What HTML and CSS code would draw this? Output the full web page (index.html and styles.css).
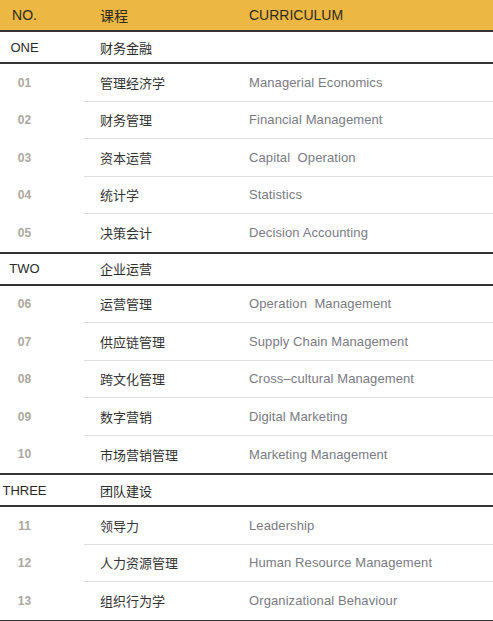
FILE: index.html
```html
<!DOCTYPE html>
<html lang="zh-CN">
<head>
<meta charset="utf-8">
<title>课程</title>
<link rel="stylesheet" href="styles.css">
</head>
<body>
<div class="table">
  <div class="head">
    <div class="c1">NO.</div>
    <div class="c2">课程</div>
    <div class="c3">CURRICULUM</div>
  </div>

  <div class="group">
    <div class="c1">ONE</div>
    <div class="c2">财务金融</div>
  </div>
  <div class="rows">
    <div class="row"><div class="num">01</div><div class="line"><div class="zh">管理经济学</div><div class="en">Managerial Economics</div></div></div>
    <div class="row"><div class="num">02</div><div class="line"><div class="zh">财务管理</div><div class="en">Financial Management</div></div></div>
    <div class="row"><div class="num">03</div><div class="line"><div class="zh">资本运营</div><div class="en">Capital&nbsp; Operation</div></div></div>
    <div class="row"><div class="num">04</div><div class="line"><div class="zh">统计学</div><div class="en">Statistics</div></div></div>
    <div class="row"><div class="num">05</div><div class="line"><div class="zh">决策会计</div><div class="en">Decision Accounting</div></div></div>
  </div>

  <div class="group">
    <div class="c1">TWO</div>
    <div class="c2">企业运营</div>
  </div>
  <div class="rows">
    <div class="row"><div class="num">06</div><div class="line"><div class="zh">运营管理</div><div class="en">Operation&nbsp; Management</div></div></div>
    <div class="row"><div class="num">07</div><div class="line"><div class="zh">供应链管理</div><div class="en">Supply Chain Management</div></div></div>
    <div class="row"><div class="num">08</div><div class="line"><div class="zh">跨文化管理</div><div class="en">Cross–cultural Management</div></div></div>
    <div class="row"><div class="num">09</div><div class="line"><div class="zh">数字营销</div><div class="en">Digital Marketing</div></div></div>
    <div class="row"><div class="num">10</div><div class="line"><div class="zh">市场营销管理</div><div class="en">Marketing Management</div></div></div>
  </div>

  <div class="group">
    <div class="c1">THREE</div>
    <div class="c2">团队建设</div>
  </div>
  <div class="rows last">
    <div class="row"><div class="num">11</div><div class="line"><div class="zh">领导力</div><div class="en">Leadership</div></div></div>
    <div class="row"><div class="num">12</div><div class="line"><div class="zh">人力资源管理</div><div class="en">Human Resource Management</div></div></div>
    <div class="row"><div class="num">13</div><div class="line"><div class="zh">组织行为学</div><div class="en">Organizational Behaviour</div></div></div>
  </div>
</div>
</body>
</html>
```

FILE: styles.css
```css
html, body {
  margin: 0;
  padding: 0;
  background: #ffffff;
}

body {
  font-family: "Liberation Sans", "Noto Sans CJK SC", sans-serif;
  color: #333333;
}

.table {
  width: 493px;
}

.head,
.group {
  display: flex;
  align-items: center;
}

.head {
  height: 30px;
  background: #ecb843;
  font-size: 14px;
  color: #2e2a22;
}

.group {
  height: 34px;
  box-sizing: border-box;
  border-top: 2px solid #343434;
  border-bottom: 2px solid #343434;
  font-size: 13px;
  color: #2a2a2a;
}

.c1 {
  width: 49px;
  text-align: center;
  margin-right: 35px;
}

.c2 {
  width: 149px;
  padding-left: 16px;
}

.c3 {
  flex: 1;
}

.rows.last {
  border-bottom: 2px solid #343434;
}

.row {
  display: flex;
  height: 37.5px;
}

.num {
  width: 49px;
  margin-right: 35px;
  text-align: center;
  font-size: 12px;
  font-weight: bold;
  color: #aca7a1;
  display: flex;
  align-items: center;
  justify-content: center;
}

.line {
  flex: 1;
  display: flex;
  align-items: center;
  box-sizing: border-box;
  border-bottom: 1px solid #dcdedf;
}

.row:last-child .line {
  border-bottom: none;
}

.zh {
  width: 149px;
  padding-left: 16px;
  font-size: 13px;
  color: #333333;
}

.en {
  flex: 1;
  font-size: 13px;
  color: #7a7a84;
  letter-spacing: 0.1px;
}
```
